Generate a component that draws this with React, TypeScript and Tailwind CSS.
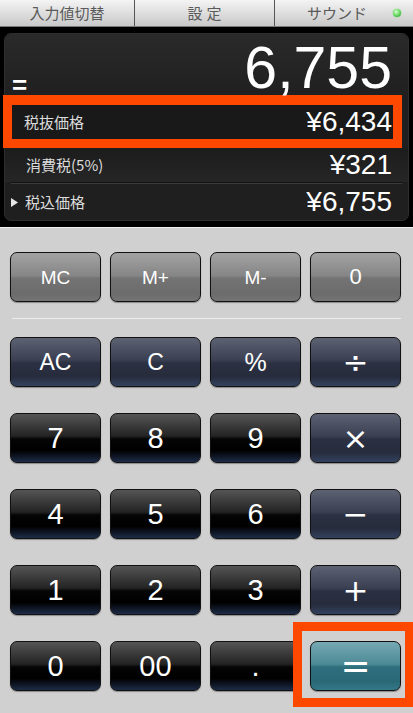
import React from "react";

type Key = { label: string; kind: "mem" | "op" | "num" | "eq"; size?: string };

const sym = "text-[31px] font-['DejaVu_Sans',sans-serif]";

const rows: Key[][] = [
  [
    { label: "AC", kind: "op", size: "text-[23px]" },
    { label: "C", kind: "op", size: "text-[23px]" },
    { label: "%", kind: "op", size: "text-[25px]" },
    { label: "÷", kind: "op", size: sym },
  ],
  [
    { label: "7", kind: "num" },
    { label: "8", kind: "num" },
    { label: "9", kind: "num" },
    { label: "×", kind: "op", size: sym },
  ],
  [
    { label: "4", kind: "num" },
    { label: "5", kind: "num" },
    { label: "6", kind: "num" },
    { label: "−", kind: "op", size: sym },
  ],
  [
    { label: "1", kind: "num" },
    { label: "2", kind: "num" },
    { label: "3", kind: "num" },
    { label: "+", kind: "op", size: sym },
  ],
  [
    { label: "0", kind: "num" },
    { label: "00", kind: "num" },
    { label: ".", kind: "num" },
    { label: "=", kind: "eq", size: "text-[36px] font-['DejaVu_Sans',sans-serif]" },
  ],
];

const memKeys = ["MC", "M+", "M-", "0"];

const kindClass: Record<Key["kind"], string> = {
  mem: "bg-[linear-gradient(#a3a3a3,#858585_48%,#747474_52%,#6c6c6c_85%,#747474)]",
  op: "bg-[linear-gradient(#5c6272,#3a4052_46%,#2b3042_52%,#272c3d_80%,#33425f)]",
  num: "bg-[linear-gradient(#555555,#232323_46%,#050505_52%,#000000_76%,#1d2c48)]",
  eq: "bg-[linear-gradient(#76a9b3,#4c8a96_46%,#2f6f7d_52%,#2a6876_82%,#347889)]",
};

function CalcKey({ k }: { k: Key }) {
  return (
    <button
      className={`h-[50px] w-[91px] rounded-[7px] border-[1.5px] border-[#111] text-white shadow-[0_1px_1px_rgba(0,0,0,0.35)] flex items-center justify-center leading-none ${kindClass[k.kind]} ${k.size ?? "text-[29px]"}`}
    >
      {k.label}
    </button>
  );
}

export default function App() {
  return (
    <div className="w-[413px] h-[713px] overflow-hidden bg-[#d0d0d0] font-['Liberation_Sans','Noto_Sans_CJK_JP',sans-serif]">
      {/* tab bar */}
      <div className="flex h-[27px] bg-[linear-gradient(#f4f4f4,#dedede_50%,#c9c9c9)] border-b border-[#7a7a7a] text-[15px] text-[#5a5a5a] font-['Noto_Sans_CJK_JP',sans-serif]">
        <div className="w-[135px] flex items-center justify-center border-r border-[#555]">
          入力値切替
        </div>
        <div className="w-[140px] flex items-center justify-center border-r border-[#555] tracking-[4px] pl-[4px]">
          設定
        </div>
        <div className="flex-1 flex items-center justify-center relative pr-[14px]">
          サウンド
          <span className="absolute right-[12px] top-[9px] h-[8px] w-[8px] rounded-full bg-[radial-gradient(circle_at_40%_35%,#d8ffcf,#5fd35a_55%,#2f8f2c)] shadow-[0_0_2px_#7fe07a]" />
        </div>
      </div>

      {/* display */}
      <div className="h-[200px] bg-black px-[4px] pt-[6px]">
        <div className="h-[188px] w-[405px] rounded-[7px] bg-[#1f1f1f] border border-[#2e2e2e]">
          <div className="h-[61px] flex items-start justify-between px-[7px] pt-[5px] bg-[linear-gradient(#2a2a2a,#202020)] rounded-t-[7px]">
            <span className="mt-[33px] text-[26px] leading-none text-white font-bold">=</span>
            <span className="text-[59px] leading-none text-white pr-[9px]">6,755</span>
          </div>
          <div className="-ml-[2px] w-[399px] h-[53px] border-[9px] border-t-[10px] border-[#fe4800] bg-[#191919] flex items-center justify-between pl-[12px] pr-[1px]">
            <span className="text-[15px] text-[#dcdcdc] font-['Noto_Sans_CJK_JP',sans-serif]">税抜価格</span>
            <span className="text-[28px] leading-none text-white">¥6,434</span>
          </div>
          <div className="h-[34px] flex items-center justify-between pl-[21px] pr-[16px] bg-[linear-gradient(#1c1c1c,#262626)]">
            <span className="text-[15px] text-[#dcdcdc] font-['Noto_Sans_CJK_JP',sans-serif]">消費税(5%)</span>
            <span className="text-[28px] leading-none text-white">¥321</span>
          </div>
          <div className="mx-[6px] h-[2px] border-t border-[#111] bg-[#3c3c3c]" />
          <div className="h-[36px] flex items-center justify-between pl-[6px] pr-[16px]">
            <span className="flex items-center gap-[7px] text-[15px] text-[#dcdcdc] font-['Noto_Sans_CJK_JP',sans-serif]">
              <svg width="7" height="9" viewBox="0 0 7 9">
                <path d="M0 0 L7 4.5 L0 9 Z" fill="#e6e6e6" />
              </svg>
              税込価格
            </span>
            <span className="text-[28px] leading-none text-white">¥6,755</span>
          </div>
        </div>
      </div>

      {/* keypad */}
      <div className="border-t border-[#f2f2f2] pt-[24px] pl-[10px]">
        <div className="flex gap-x-[9px]">
          {memKeys.map((m) => (
            <CalcKey key={m} k={{ label: m, kind: "mem", size: m === "0" ? "text-[22px]" : "text-[19px]" }} />
          ))}
        </div>
        <div className="mt-[16px] ml-[2px] w-[389px] h-px bg-[#ededed]" />
        <div className="mt-[18px] grid grid-cols-[91px_91px_91px_91px] gap-x-[9px] gap-y-[26px]">
          {rows.flat().map((k, i) =>
            k.kind === "eq" ? (
              <div key={i} className="relative">
                <CalcKey k={k} />
                <div className="absolute -left-[17px] -top-[19px] -right-[13px] -bottom-[16px] border-[9px] border-[#fe4800]" />
              </div>
            ) : (
              <CalcKey key={i} k={k} />
            )
          )}
        </div>
      </div>
    </div>
  );
}
